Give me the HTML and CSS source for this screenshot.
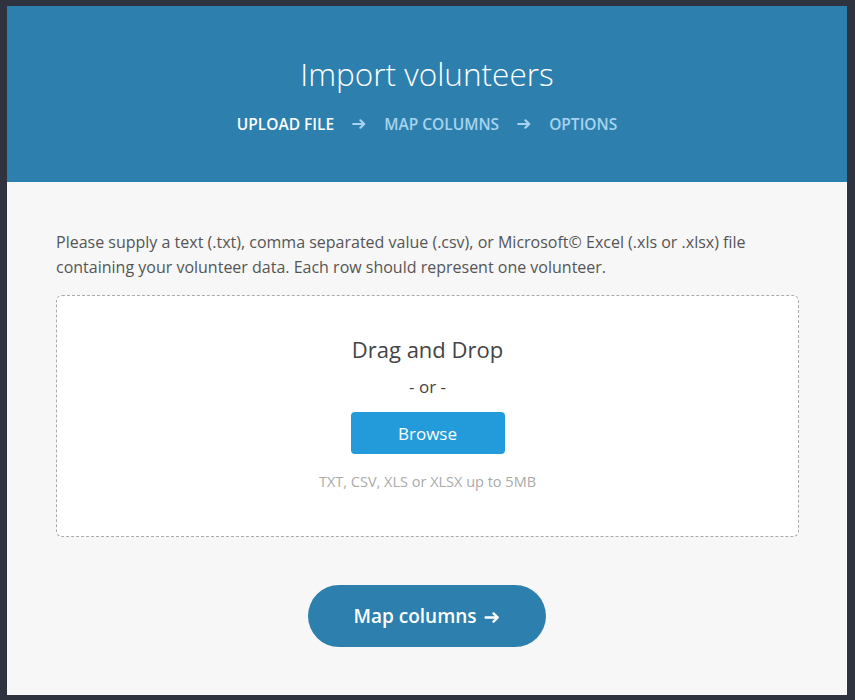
FILE: index.html
```html
<!DOCTYPE html>
<html lang="en">
<head>
    <meta charset="UTF-8">
    <meta name="viewport" content="width=device-width, initial-scale=1.0">
    <title>Import volunteers</title>
    <link rel="stylesheet" href="styles.css">
</head>
<body>

    <div class="panel">
        <!-- Header with steps -->
        <div class="header">
            <h1>Import volunteers</h1>
            <div class="steps">
                <span class="step active">Upload file</span>
                <svg class="arrow" viewBox="0 0 14 10"><path d="M1.2 5H12.2M8.4 1.3L12.2 5L8.4 8.7"/></svg>
                <span class="step">Map columns</span>
                <svg class="arrow" viewBox="0 0 14 10"><path d="M1.2 5H12.2M8.4 1.3L12.2 5L8.4 8.7"/></svg>
                <span class="step">Options</span>
            </div>
        </div>

        <div class="content">
            <p class="intro">Please supply a text (.txt), comma separated value (.csv), or Microsoft© Excel (.xls or .xlsx) file containing your volunteer data. Each row should represent one volunteer.</p>

            <div class="dropzone">
                <div class="drop-title">Drag and Drop</div>
                <div class="drop-or">- or -</div>
                <button class="browse-btn">Browse</button>
                <div class="drop-hint">TXT, CSV, XLS or XLSX up to 5MB</div>
            </div>

            <div class="actions">
                <button class="next-btn">Map columns <svg class="btn-arrow" viewBox="0 0 14 10"><path d="M1.2 5H12.2M8.4 1.3L12.2 5L8.4 8.7"/></svg></button>
            </div>
        </div>
    </div>

</body>
</html>
```
FILE: styles.css
```css
body {
    margin: 0;
    padding: 6px 8px 5px 7px;
    background-color: #2f333f;
    font-family: "Open Sans", Arial, sans-serif;
}

.panel {
    height: 689px;
    background-color: #f7f7f7;
    display: flex;
    flex-direction: column;
}

.header {
    height: 176px;
    background-color: #2d80ae;
    color: #fff;
    text-align: center;
    box-sizing: border-box;
    padding-top: 47px;
}

.header h1 {
    margin: 0;
    font-size: 31.5px;
    font-weight: 300;
    line-height: 42px;
}

.steps {
    margin-top: 18px;
    font-size: 15.5px;
    font-weight: 600;
    line-height: 22px;
    text-transform: uppercase;
    display: flex;
    justify-content: center;
    align-items: center;
    gap: 18px;
}

.step {
    color: #a6d3ef;
}

.step.active {
    color: #fff;
}

.arrow {
    width: 14px;
    height: 10px;
    fill: none;
    stroke: #a6d3ef;
    stroke-width: 2.2;
    stroke-linecap: round;
    stroke-linejoin: round;
}

.content {
    padding: 48px 48px 0 49px;
}

.intro {
    margin: 0 0 15px 0;
    font-size: 16px;
    line-height: 25px;
    color: #555;
}

.dropzone {
    height: 242px;
    box-sizing: border-box;
    border: 1px dashed #aaa;
    border-radius: 6px;
    background-color: #fff;
    text-align: center;
    padding-top: 38px;
}

.drop-title {
    font-size: 22px;
    color: #444;
    line-height: 30px;
}

.drop-or {
    margin-top: 12px;
    font-size: 17px;
    color: #444;
    line-height: 22px;
}

.browse-btn {
    margin-top: 14px;
    width: 154px;
    height: 42px;
    border: none;
    border-radius: 4px;
    background-color: #239bdb;
    color: #fff;
    font-family: inherit;
    font-size: 17px;
}

.drop-hint {
    margin-top: 18px;
    font-size: 14.5px;
    color: #aaa;
}

.actions {
    display: flex;
    justify-content: center;
    margin-top: 48px;
}

.next-btn {
    width: 238px;
    height: 62px;
    margin-right: 2px;
    border: none;
    border-radius: 31px;
    background-color: #2d80ae;
    color: #fff;
    font-family: inherit;
    font-size: 19px;
    font-weight: 600;
}

.btn-arrow {
    width: 16px;
    height: 11px;
    margin-left: 2px;
    fill: none;
    stroke: #fff;
    stroke-width: 2.2;
    stroke-linecap: round;
    stroke-linejoin: round;
}
```
